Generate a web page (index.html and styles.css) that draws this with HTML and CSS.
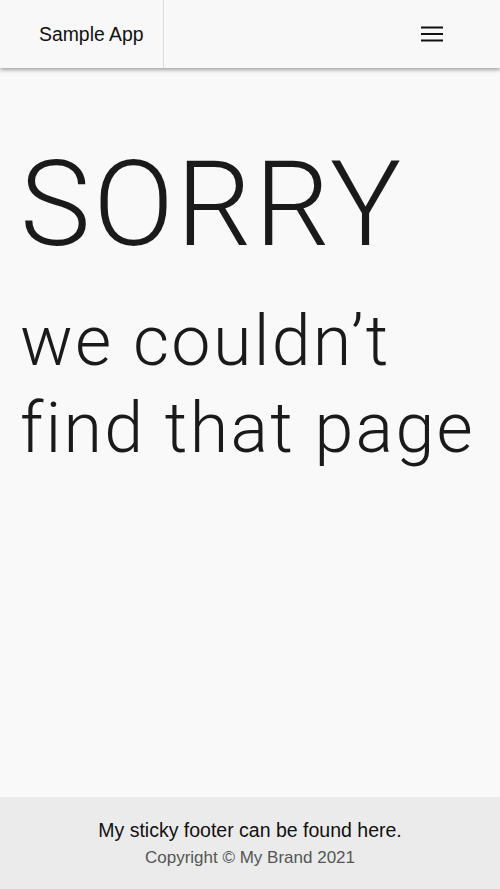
FILE: index.html
```html
<!DOCTYPE html>
<html lang="en">
<head>
<meta charset="utf-8">
<title>Sample App</title>
<link rel="stylesheet" href="styles.css">
</head>
<body>
<header class="navbar">
  <div class="brand">Sample App</div>
  <button class="menu" aria-label="Menu">
    <svg width="22" height="16" viewBox="0 0 22 16"><path d="M0 1.5H22M0 8H22M0 14.5H22" stroke="#111" stroke-width="2"/></svg>
  </button>
</header>
<main class="content">
  <h1 class="sorry">SORRY</h1>
  <p class="message">we couldn’t find that page</p>
</main>
<footer class="footer">
  <p class="footer-line">My sticky footer can be found here.</p>
  <p class="copyright">Copyright © My Brand 2021</p>
</footer>
</body>
</html>
```
FILE: styles.css
```css
html, body {
  margin: 0;
  padding: 0;
}
body {
  min-height: 100vh;
  display: flex;
  flex-direction: column;
  background: #f9f9f9;
  color: #1a1a1a;
  font-family: "Liberation Sans", Arial, sans-serif;
}
.navbar {
  height: 68px;
  display: flex;
  align-items: stretch;
  justify-content: space-between;
  background: #f8f8f8;
  box-shadow: 0 2px 4px rgba(0,0,0,0.35);
  position: relative;
  z-index: 1;
}
.brand {
  width: 124px;
  padding-left: 39px;
  border-right: 1px solid #dcdcdc;
  display: flex;
  align-items: center;
  font-size: 19.4px;
  color: #111;
}
.menu {
  background: none;
  border: 0;
  padding: 0 57px 0 0;
  display: flex;
  align-items: center;
  cursor: pointer;
}
.menu svg {
  display: block;
}
.content {
  flex: 1;
  padding: 0 20px;
}
.sorry {
  margin: 77px 0 0;
  font-family: Roboto, "Liberation Sans", sans-serif;
  font-weight: 300;
  font-size: 119px;
  line-height: 1;
  letter-spacing: 2.6px;
  color: #1a1a1a;
}
.message {
  margin: 34px 0 0;
  font-family: Roboto, "Liberation Sans", sans-serif;
  font-weight: 300;
  font-size: 70px;
  line-height: 87px;
  letter-spacing: 2.3px;
  font-variant-ligatures: none;
  color: #1a1a1a;
}
.footer {
  background: #ebebeb;
  text-align: center;
  padding: 20px 0 18px;
}
.footer p {
  margin: 0;
  line-height: 26px;
}
.footer-line {
  font-size: 19.5px;
  color: #111;
}
.footer .copyright {
  margin-top: 2px;
  font-size: 17px;
  color: #555;
}
```
